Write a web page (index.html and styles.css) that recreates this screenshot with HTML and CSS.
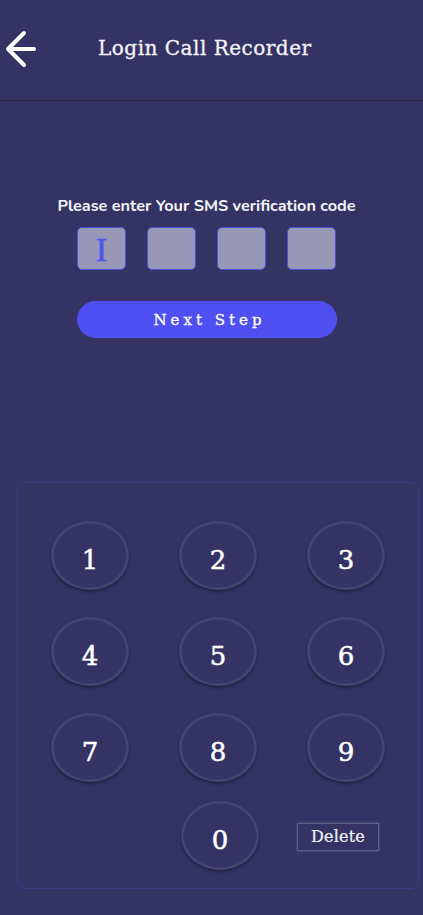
FILE: index.html
```html
<!DOCTYPE html>
<html>
<head>
<meta charset="utf-8">
<link rel="stylesheet" href="styles.css">
</head>
<body>
<div class="app">
  <header class="header">
    <svg class="back" width="32" height="40" viewBox="0 0 32 40">
      <path d="M19 4 L3 20 L19 36 M3 20 L29 20" fill="none" stroke="#fff" stroke-width="4" stroke-linecap="round" stroke-linejoin="round"/>
    </svg>
    <h1 class="title">Login Call Recorder</h1>
  </header>
  <main class="content">
    <p class="label">Please enter Your SMS verification code</p>
    <div class="codes">
      <div class="code"><span class="caret">I</span></div>
      <div class="code"></div>
      <div class="code"></div>
      <div class="code"></div>
    </div>
    <button class="next">Next Step</button>
  </main>
  <section class="pad">
    <div class="keys">
      <div class="key">1</div>
      <div class="key">2</div>
      <div class="key">3</div>
      <div class="key">4</div>
      <div class="key">5</div>
      <div class="key">6</div>
      <div class="key">7</div>
      <div class="key">8</div>
      <div class="key">9</div>
      <div class="spacer"></div>
      <div class="key zero">0</div>
      <div class="delete">Delete</div>
    </div>
  </section>
</div>
</body>
</html>
```
FILE: styles.css
```css
* { box-sizing: border-box; }
html, body { margin: 0; padding: 0; }
body {
  background: #343364;
  width: 423px;
  height: 915px;
  overflow: hidden;
  font-family: "DejaVu Serif", serif;
  color: #fff;
}
.app { display: flex; flex-direction: column; }
.header {
  height: 101px;
  border-bottom: 1.5px solid #2c2c40;
  display: flex;
  align-items: center;
  padding-left: 5px;
  padding-bottom: 4px;
}
.back { flex: none; margin-top: 1px; }
.title {
  margin: 0 0 0 61px;
  font-size: 20px;
  font-weight: normal;
  letter-spacing: 0.5px;
  color: #f4f4f8;
  -webkit-text-stroke: 0.3px #f4f4f8;
}
.content {
  display: flex;
  flex-direction: column;
  align-items: center;
  padding-top: 96px;
  padding-right: 10px;
}
.label {
  margin: 0;
  font-family: "Nunito", "Lato", "Noto Sans", sans-serif;
  font-weight: bold;
  font-size: 16.2px;
  line-height: 19px;
  color: #f4f4f8;
}
.codes {
  display: flex;
  gap: 21px;
  margin-top: 11px;
}
.code {
  width: 49px;
  height: 43px;
  background: #9897b5;
  border: 1px solid #4b4fd8;
  border-radius: 5px;
  display: flex;
  align-items: center;
  justify-content: center;
}
.caret {
  color: #5155f2;
  font-family: "Liberation Serif", serif;
  font-size: 34px;
  line-height: 1;
  padding-top: 2px;
  -webkit-text-stroke: 0.6px #5155f2;
}
.next {
  margin-top: 31px;
  width: 260px;
  height: 37px;
  border: none;
  border-radius: 19px;
  background: #5050f2;
  color: #fff;
  font-family: "DejaVu Serif", serif;
  font-size: 15px;
  letter-spacing: 4px;
  padding: 0 0 0 6px;
  -webkit-text-stroke: 0.3px #fff;
}
.pad {
  margin: 144px 4px 0 17px;
  height: 407px;
  border: 1px solid #393c88;
  border-radius: 8px;
  padding: 38px 8px 0 8px;
}
.keys {
  display: grid;
  grid-template-columns: repeat(3, 128px);
  grid-auto-rows: 69px;
  row-gap: 27px;
}
.key {
  justify-self: center;
  width: 78px;
  height: 69px;
  border-radius: 50%;
  border: 1px solid rgba(255,255,255,0.07);
  box-shadow: inset 0 0 3px rgba(255,255,255,0.28), 0 2px 3px rgba(0,0,0,0.35);
  display: flex;
  align-items: center;
  justify-content: center;
  padding-top: 9px;
  font-size: 26px;
  color: #fff;
  -webkit-text-stroke: 0.5px #fff;
}
.spacer, .zero, .delete { margin-top: -8px; }
.zero { transform: translateX(2px); }
.delete {
  justify-self: start;
  align-self: center;
  margin-left: 15px;
  width: 82px;
  height: 28px;
  border: 1px solid rgba(255,255,255,0.22);
  box-shadow: 0 0 2px rgba(255,255,255,0.25);
  display: flex;
  align-items: center;
  justify-content: center;
  font-size: 16px;
  letter-spacing: 0.2px;
  color: #f4f4f8;
  -webkit-text-stroke: 0.2px #f4f4f8;
  position: relative;
  top: -3px;
}
```
